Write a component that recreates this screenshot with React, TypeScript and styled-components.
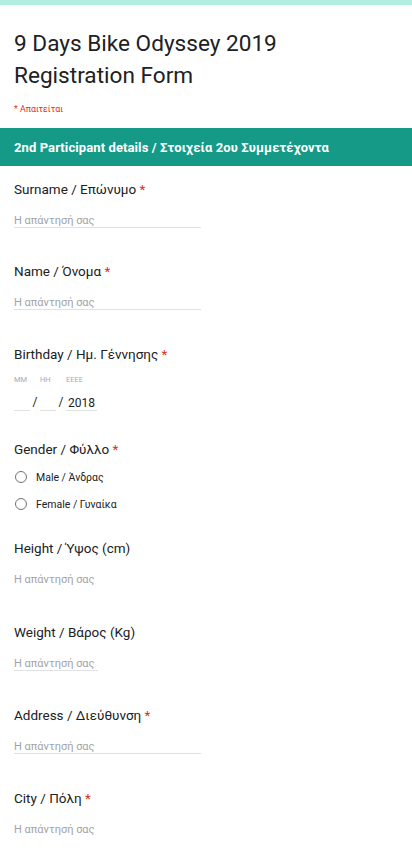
import React from "react";
import styled, { createGlobalStyle } from "styled-components";

const Global = createGlobalStyle`
  html, body { margin: 0; padding: 0; background: #ffffff; }
  body { font-family: Roboto, "Noto Sans", Arial, sans-serif; color: #202124; }
`;

const Page = styled.div`
  width: 412px;
  height: 864px;
  overflow: hidden;
  background: #fff;
`;

const TopBar = styled.div`
  height: 5px;
  background: #b3efe1;
`;

const Head = styled.div`
  padding: 23px 14px 11px;
`;

const Title = styled.h1`
  margin: 0;
  font-size: 22.6px;
  line-height: 32px;
  font-weight: 400;
  color: #202124;
`;

const RequiredNote = styled.div`
  margin-top: 9px;
  font-size: 8.8px;
  line-height: 16px;
  color: #d93025;
`;

const Section = styled.div`
  height: 38px;
  box-sizing: border-box;
  padding: 10px 14px 0;
  background: #149a87;
  color: #fff;
  font-size: 13px;
  line-height: 20px;
  font-weight: 700;
  letter-spacing: 0.1px;
  white-space: nowrap;
`;

const Body = styled.div`
  padding: 13px 14px 0;
`;

const Question = styled.div<{ $after?: number }>`
  padding-bottom: ${(p) => p.$after ?? 33}px;
`;

const Label = styled.div`
  font-size: 13.5px;
  line-height: 20px;
  color: #202124;
  white-space: nowrap;
`;

const Star = styled.span`
  color: #d93025;
`;

const TextInput = styled.div<{ $width: number; $line?: boolean }>`
  margin-top: 12px;
  padding-top: 2px;
  width: ${(p) => p.$width}px;
  height: 14px;
  font-size: 11px;
  line-height: 16px;
  color: #a0a4a8;
  white-space: nowrap;
  border-bottom: 1px solid ${(p) => (p.$line === false ? "transparent" : "#dfe1e4")};
`;

const SubLabels = styled.div`
  margin-top: 11px;
  display: flex;
  font-size: 7.5px;
  line-height: 10px;
  color: #a8abae;
`;

const SubLabel = styled.span<{ $width: number }>`
  width: ${(p) => p.$width}px;
`;

const DateRow = styled.div`
  margin-top: 9px;
  display: flex;
  align-items: flex-end;
  font-size: 12px;
  line-height: 16px;
  color: #202124;
`;

const DateField = styled.div<{ $width: number }>`
  width: ${(p) => p.$width}px;
  height: 16px;
  padding-left: 2px;
  box-sizing: border-box;
  border-bottom: 1px solid #dfe1e4;
`;

const Slash = styled.span`
  width: 10px;
  text-align: center;
  height: 17px;
`;

const Options = styled.div`
  margin-top: 8px;
  display: flex;
  flex-direction: column;
  gap: 7px;
`;

const Option = styled.div`
  display: flex;
  align-items: center;
  height: 20px;
  font-size: 10.5px;
  color: #202124;
`;

const Radio = styled.span`
  width: 10px;
  height: 10px;
  border: 1.5px solid #6f7377;
  border-radius: 50%;
  margin: 0 9px 0 1px;
`;

type Q = { label: string; required?: boolean; width?: number; line?: boolean; after?: number };

const TextQuestion = ({ label, required, width = 187, line, after }: Q) => (
  <Question $after={after}>
    <Label>
      {label}
      {required && <Star> *</Star>}
    </Label>
    <TextInput $width={width} $line={line}>
      Η απάντησή σας
    </TextInput>
  </Question>
);

export default function App() {
  return (
    <Page>
      <Global />
      <TopBar />
      <Head>
        <Title>
          9 Days Bike Odyssey 2019
          <br />
          Registration Form
        </Title>
        <RequiredNote>* Απαιτείται</RequiredNote>
      </Head>
      <Section>2nd Participant details / Στοιχεία 2ου Συμμετέχοντα</Section>
      <Body>
        <TextQuestion label="Surname / Επώνυμο" required />
        <TextQuestion label="Name / Όνομα" required after={34} />
        <Question $after={28}>
          <Label>
            Birthday / Ημ. Γέννησης<Star> *</Star>
          </Label>
          <SubLabels>
            <SubLabel $width={26}>MM</SubLabel>
            <SubLabel $width={26}>HH</SubLabel>
            <SubLabel $width={32}>EEEE</SubLabel>
          </SubLabels>
          <DateRow>
            <DateField $width={16} />
            <Slash>/</Slash>
            <DateField $width={16} />
            <Slash>/</Slash>
            <DateField $width={31}>2018</DateField>
          </DateRow>
        </Question>
        <Question $after={24}>
          <Label>
            Gender / Φύλλο<Star> *</Star>
          </Label>
          <Options>
            <Option>
              <Radio />
              Male / Άνδρας
            </Option>
            <Option>
              <Radio />
              Female / Γυναίκα
            </Option>
          </Options>
        </Question>
        <TextQuestion label="Height / Ύψος (cm)" line={false} width={84} after={35} />
        <TextQuestion label="Weight / Βάρος (Kg)" width={84} after={34} />
        <TextQuestion label="Address / Διεύθυνση" required after={34} />
        <TextQuestion label="City / Πόλη" required line={false} />
      </Body>
    </Page>
  );
}
